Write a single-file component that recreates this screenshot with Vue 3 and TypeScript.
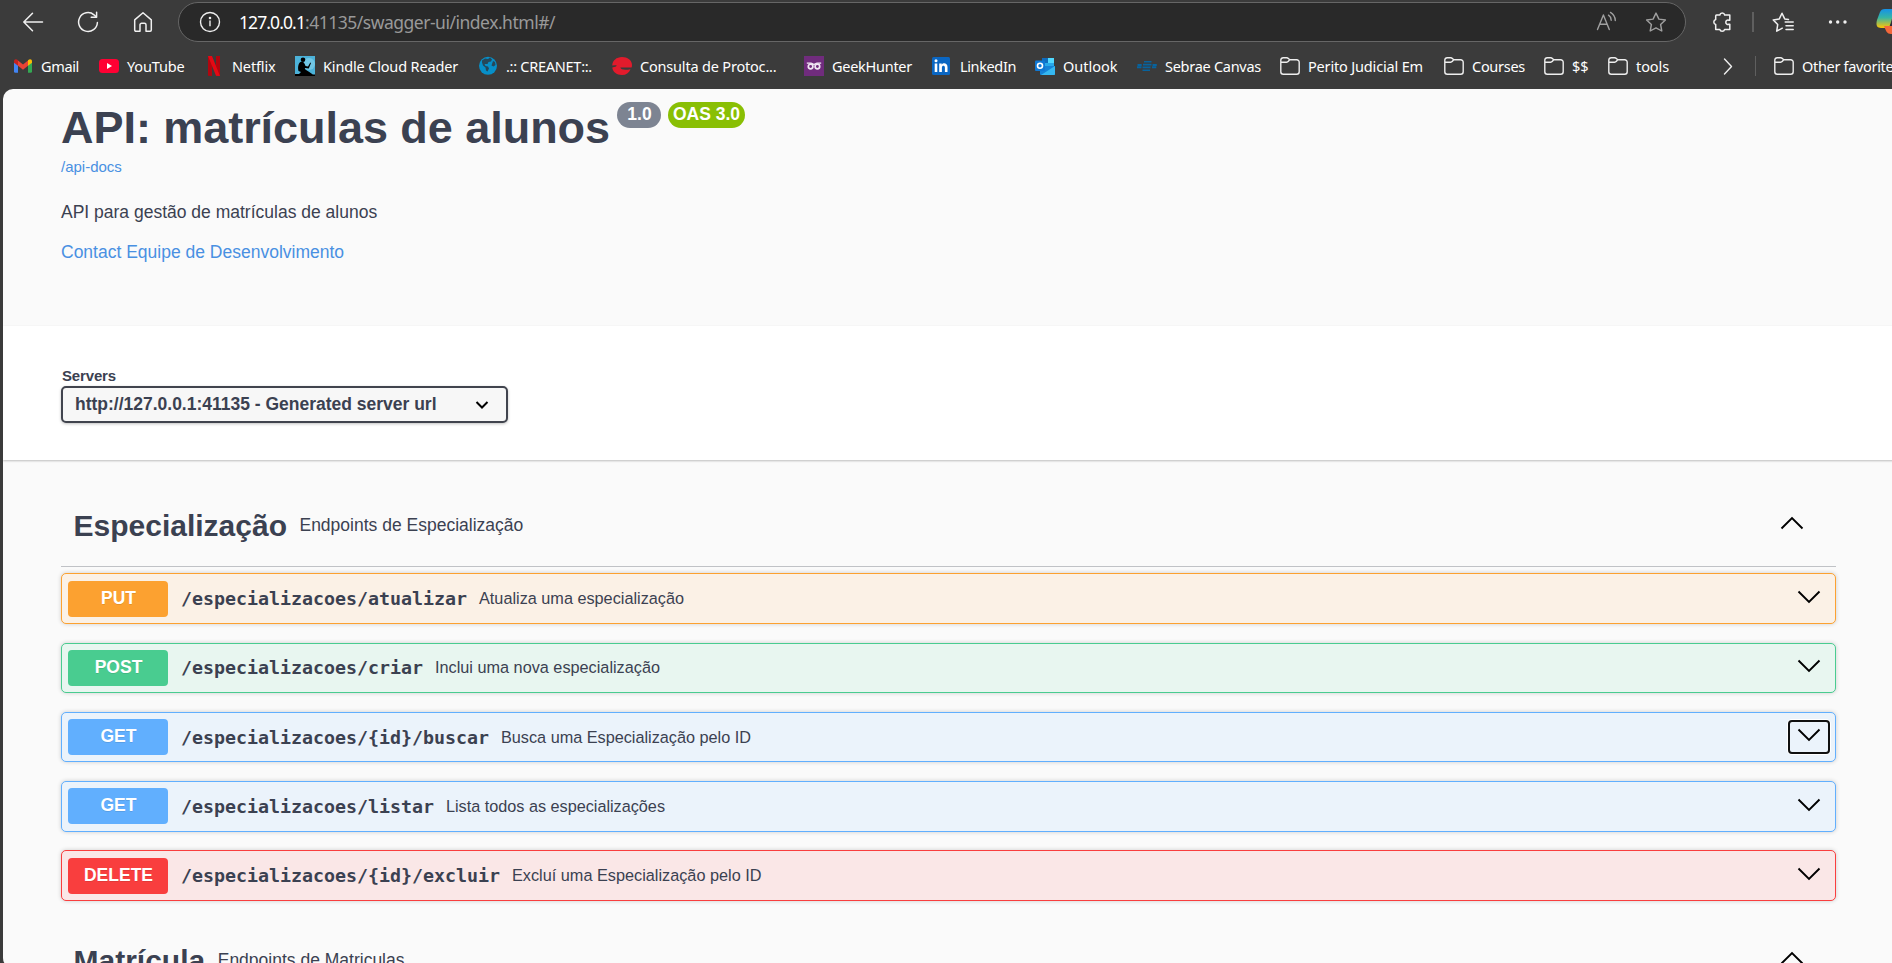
<script setup lang="ts">
import type { ObjectDirective } from 'vue'

interface Bookmark { icon: string; label: string; slot: number; textWidth: number }
interface Operation { method: string; path: string; pathWidth: number; summary: string; summaryWidth: number; focused?: boolean }

// Spreads letters evenly so that a label fills the given width.
const vFit: ObjectDirective<HTMLElement, number> = {
  mounted(el, binding) {
    const count = (el.textContent ?? '').trim().length
    const natural = el.getBoundingClientRect().width
    if (count > 1) el.style.letterSpacing = `${(binding.value - natural) / count}px`
  },
}

const bookmarks: Bookmark[] = [
  { icon: 'gmail', label: 'Gmail', slot: 86, textWidth: 38 },
  { icon: 'youtube', label: 'YouTube', slot: 105, textWidth: 57.5 },
  { icon: 'netflix', label: 'Netflix', slot: 91, textWidth: 43.5 },
  { icon: 'kindle', label: 'Kindle Cloud Reader', slot: 183, textWidth: 135 },
  { icon: 'globe', label: '.:: CREANET::.', slot: 134, textWidth: 86 },
  { icon: 'consulta', label: 'Consulta de Protoc...', slot: 192, textWidth: 136.5 },
  { icon: 'geek', label: 'GeekHunter', slot: 128, textWidth: 80 },
  { icon: 'linkedin', label: 'LinkedIn', slot: 103, textWidth: 56 },
  { icon: 'outlook', label: 'Outlook', slot: 102, textWidth: 54.5 },
  { icon: 'sebrae', label: 'Sebrae Canvas', slot: 143, textWidth: 96 },
  { icon: 'folder', label: 'Perito Judicial Em', slot: 164, textWidth: 115 },
  { icon: 'folder', label: 'Courses', slot: 100, textWidth: 53 },
  { icon: 'folder', label: '$$', slot: 64, textWidth: 16.5 },
  { icon: 'folder', label: 'tools', slot: 115, textWidth: 33 },
  { icon: 'more', label: '', slot: 51, textWidth: 0 },
  { icon: 'folder', label: 'Other favorites', slot: 140, textWidth: 98 },
]

const operations: Operation[] = [
  { method: 'PUT', path: '/especializacoes/atualizar', pathWidth: 286, summary: 'Atualiza uma especialização', summaryWidth: 205 },
  { method: 'POST', path: '/especializacoes/criar', pathWidth: 242, summary: 'Inclui uma nova especialização', summaryWidth: 225 },
  { method: 'GET', path: '/especializacoes/{id}/buscar', pathWidth: 308, summary: 'Busca uma Especialização pelo ID', summaryWidth: 250, focused: true },
  { method: 'GET', path: '/especializacoes/listar', pathWidth: 253, summary: 'Lista todos as especializações', summaryWidth: 219 },
  { method: 'DELETE', path: '/especializacoes/{id}/excluir', pathWidth: 319, summary: 'Excluí uma Especialização pelo ID', summaryWidth: 249.5 },
]
</script>

<template>
  <div class="window">
    <header class="chrome">
      <div class="toolbar">
        <svg class="tool back" viewBox="0 0 22 22"><path d="M20.5 11H2M10.5 2.2 1.8 11l8.7 8.8" /></svg>
        <svg class="tool reload" viewBox="0 0 22 22"><path d="M20.4 11.5A9.4 9.4 0 1 1 17 3.8L19.5 6M19.6 1.2V6.3H14.2" /></svg>
        <svg class="tool home" viewBox="0 0 22 22"><path d="M2.7 8.9 11 1.8l8.3 7.1V19a1.2 1.2 0 0 1-1.2 1.2H14v-6.4a1.6 1.6 0 0 0-1.6-1.6H9.6A1.6 1.6 0 0 0 8 13.8v6.4H3.9A1.2 1.2 0 0 1 2.7 19Z" /></svg>
        <div class="address">
          <svg class="info-icon" viewBox="0 0 22 22"><circle cx="11" cy="11" r="9.5" /><path d="M11 9.6v5.6" /><circle cx="11" cy="7" r=".6" /></svg>
          <span class="url"><b v-fit="66">127.0.0.1</b><span v-fit="250">:41135/swagger-ui/index.html#/</span></span>
          <svg class="address-icon read" viewBox="0 0 22 22"><path d="M1.5 18.5 7.4 4l5.9 14.5M3.700 13.3h7.5M12.5 4.2c1.700 1.100 2.600 2.800 2.700 5M14.500 1.400c3.100 1.900 4.700 4.600 4.800 8.100" /></svg>
          <svg class="address-icon" viewBox="0 0 22 22"><path d="m11 2.1 2.9 6 6.500.9-4.800 4.500 1.200 6.500L11 16.900l-5.800 3.100 1.200-6.500L1.600 9l6.500-.9Z" /></svg>
        </div>
        <svg class="tool puzzle" viewBox="0 0 22 22"><path d="M5.600 4h3.200a2.500 2.500 0 0 1 4.900 0h5.100v5.200h-1a2.200 2.200 0 1 0 0 4.100h1v5.200h-5.200a2.500 2.500 0 0 1-4.800 0H4.700v-5a2.600 2.600 0 0 1 0-5V5a1 1 0 0 1 .9-1Z" /></svg>
        <i class="divider tall"></i>
        <svg class="tool favs" viewBox="0 0 22 22"><path d="M10.300 17.200 4.700 20.200l1-6.600L1.300 8.900l6-1L10 2.200l2.700 5.700 3.800.6M13.200 11h8M14 14.800h7.200M14 18.600h7.200" /></svg>
        <svg class="tool dots" viewBox="0 0 22 22"><circle cx="3.500" cy="11" r="1.700" /><circle cx="10.700" cy="11" r="1.700" /><circle cx="18" cy="11" r="1.700" /></svg>
        <svg class="copilot" viewBox="0 0 30 28">
          <defs>
            <linearGradient id="cool" x1="0" y1="0" x2="0" y2="1"><stop offset="0" stop-color="#1591e8" /><stop offset=".45" stop-color="#35b5a6" /><stop offset=".95" stop-color="#f1c40f" /></linearGradient>
          </defs>
          <path d="M9 1h14l-3 6c-4 0-4 4-6 10-1 3-2 3-5 3H5C0 20 0 16 1 12L4 4c1-2 2-3 5-3Z" fill="url(#cool)" />
          <path d="M8 18h7l5-11 10 3v16H15c-4 0-5-3-7-8Z" fill="#f4673a" />
          <path d="M16 1h8l4 9h-9Z" fill="#154da7" />
          <path d="m14 18 4-10h10v10Z" fill="#292c37" />
        </svg>
      </div>

      <nav class="bookmarks">
        <div v-for="(b, i) in bookmarks" :key="i" class="bookmark" :style="{ width: b.slot + 'px' }">
          <svg v-if="b.icon === 'gmail'" class="fav" viewBox="0 0 20 20"><path d="M1 6v9.500a1.300 1.300 0 0 0 1.300 1.300H5V8Z" fill="#4285f4" /><path d="M15 8v8.800h2.700a1.300 1.300 0 0 0 1.300-1.300V6Z" fill="#34a853" /><path d="M5 4.500 10 8.500l5-4v5.200l-5 4-5-4Z" fill="#ea4335" /><path d="M1 5.200C1 3 3.200 2.400 5 4.200v5.500L1 6.800Z" fill="#c5221f" /><path d="M19 5.200c0-2.200-2.200-2.800-4-1v5.500l4-2.900Z" fill="#fbbc04" /></svg>
          <svg v-else-if="b.icon === 'youtube'" class="fav" viewBox="0 0 20 20"><rect x="0" y="3" width="20" height="14" rx="3.500" fill="#ff0033" /><path d="m8 7 5 3-5 3Z" fill="#fff" /></svg>
          <svg v-else-if="b.icon === 'netflix'" class="fav" viewBox="0 0 20 20"><path d="M4 0h4v20l-4-.3ZM12 0h4v20l-4-.3Z" fill="#b1060f" /><path d="M4 0h4l8 20-4-.3Z" fill="#e50914" /></svg>
          <svg v-else-if="b.icon === 'kindle'" class="fav" viewBox="0 0 20 20"><rect width="20" height="20" fill="#4cb2d9" /><circle cx="14" cy="8" r="6" fill="#8bd5ec" opacity=".6" /><path d="M0 20v-2h4l2-2-2.500-1c-1-4 0-8 2-9 3-1 4 1 5 4l2.500.5 2.300-4 .7.500-2.200 5.500-4-.5.500 1.500 4 2.500 3.500 2.500H20v1.500Z" fill="#000" /><circle cx="8" cy="3.700" r="2.300" fill="#000" /></svg>
          <svg v-else-if="b.icon === 'globe'" class="fav" viewBox="0 0 20 20"><circle cx="10" cy="9.800" r="9" fill="#078fc8" /><path d="m4 4.500 3-2 3 .5 2-1.500 2 2-1 2-2.500.5-1 2-3 0 1 2 2.500.5 1 2-1.500 3-1.500-1-.5-3-2.500-2-1-3ZM15 5l2 1 .5 3-2 1.500-2-1Z" fill="#25485a" /></svg>
          <svg v-else-if="b.icon === 'consulta'" class="fav" viewBox="0 0 20 20"><path d="M10 1c5.500 0 10 3 10 8 0 1-.1 1.800-.4 2.500H8.300c.6 2.300 4.700 2.700 10.200 1.700C17 17 14 19 10 19 4.500 19 .5 15.500.3 11.500L4 10.500C5.500 7 8 5.200 11 5.200c2 0 3 1 3 2.300H9.500c-1.500 0-2.500.5-3.500 1.500L.2 9.500C.5 4.500 4.500 1 10 1Z" fill="#e21b2c" /></svg>
          <svg v-else-if="b.icon === 'geek'" class="fav" viewBox="0 0 20 20"><rect width="20" height="20" fill="#702c7d" /><g fill="none" stroke="#f1e7f4" stroke-width="1.700"><circle cx="6.600" cy="10.500" r="2.300" /><circle cx="13.400" cy="10.500" r="2.300" /><path d="M2.800 7.200H7c1.500 0 1.500 1.300 3 1.300s1.500-1.300 3-1.300h4.200" stroke-width="1.300" /></g></svg>
          <svg v-else-if="b.icon === 'linkedin'" class="fav" viewBox="0 0 20 20"><rect x="0" y="1" width="18" height="18" rx="1.500" fill="#0a66c2" /><path d="M2.700 7.500h2.600V16H2.700ZM7.200 7.500h2.500v1.200c1.500-2.300 5.800-1.700 5.800 2.300v5h-2.600v-4.500c0-2.500-3-2.300-3 0V16H7.200Z" fill="#fff" /><circle cx="4" cy="4.700" r="1.500" fill="#fff" /></svg>
          <svg v-else-if="b.icon === 'outlook'" class="fav" viewBox="0 0 20 20"><path d="M7 2h12v10H7Z" fill="#28a8ea" /><path d="M7 2h6v5H7Z" fill="#0f6cbd" /><path d="M13 2h6v5h-6Z" fill="#50d9ff" /><path d="M5 10h15v8a1 1 0 0 1-1 1H6a1 1 0 0 1-1-1Z" fill="#1583d7" /><path d="m20 10-14 9h13a1 1 0 0 0 1-1Z" fill="#35b8f1" /><rect x="0" y="4.500" width="10" height="10.500" rx="1" fill="#0f78d4" /><circle cx="5" cy="9.700" r="2.500" fill="none" stroke="#fff" stroke-width="1.600" /></svg>
          <svg v-else-if="b.icon === 'sebrae'" class="fav" viewBox="0 0 20 20"><path d="M7 5.700h7.500M5.500 14.300H13" stroke="#07639e" stroke-width="1.600" /><path d="M.5 9h4.200M0 11.200h4.500M6 8.600h8.500M5.500 11.400h8M15.500 9h4.300M15 11.200h4.300" stroke="#07639e" stroke-width="1.900" /></svg>
          <svg v-else-if="b.icon === 'folder'" class="fav line" viewBox="0 0 20 20"><path d="M.8 4A2.500 2.500 0 0 1 3.300 1.700h3.400c.8 0 1.200.3 1.700.8l1.300 1.300h7A2.500 2.500 0 0 1 19.200 6.300v9.500a2.500 2.500 0 0 1-2.500 2.500H3.300A2.500 2.500 0 0 1 .8 15.800ZM.8 6.200h5.800c.9 0 1.200-.2 1.800-.9l1.300-1.500" /></svg>
          <svg v-else class="fav line" viewBox="0 0 20 20"><path d="m1.500 3 7 7.500-7 7.500" /></svg>
          <span v-if="b.label" v-fit="b.textWidth" class="bookmark-label">{{ b.label }}</span>
          <i v-if="b.icon === 'more'" class="divider"></i>
        </div>
      </nav>
    </header>

    <main class="page">
      <section class="info">
        <div class="title-row">
          <h1 v-fit="549">API: matrículas de alunos</h1>
          <span class="badge version">1.0</span>
          <span class="badge oas">OAS 3.0</span>
        </div>
        <a class="docs">/api-docs</a>
        <p class="about">API para gestão de matrículas de alunos</p>
        <a class="contact">Contact Equipe de Desenvolvimento</a>
      </section>

      <section class="servers">
        <label>Servers</label>
        <div class="select">
          <span v-fit="361.5">http://127.0.0.1:41135 - Generated server url</span>
          <svg viewBox="0 0 14 10"><path d="m1.500 2 5.500 5.500L12.500 2" /></svg>
        </div>
      </section>

      <section class="tag">
        <div class="tag-head">
          <h2>Especialização</h2>
          <span>Endpoints de Especialização</span>
          <svg viewBox="0 0 24 14"><path d="M1.500 12.500 12 2l10.500 10.500" /></svg>
        </div>
        <div class="operations">
          <article v-for="op in operations" :key="op.path" class="op" :class="op.method.toLowerCase()">
            <span class="method"><b>{{ op.method }}</b></span>
            <code v-fit="op.pathWidth">{{ op.path }}</code>
            <span v-fit="op.summaryWidth" class="summary">{{ op.summary }}</span>
            <button :class="{ focused: op.focused }">
              <svg viewBox="0 0 24 14"><path d="M1.500 1.500 12 12 22.500 1.500" /></svg>
            </button>
          </article>
        </div>
      </section>

      <section class="tag next">
        <div class="tag-head">
          <h2>Matrícula</h2>
          <span>Endpoints de Matriculas</span>
          <svg viewBox="0 0 24 14"><path d="M1.500 12.500 12 2l10.500 10.500" /></svg>
        </div>
      </section>
    </main>
  </div>
</template>

<style>
html, body { margin: 0; overflow: hidden; background: #3b3b3b; }
</style>

<style scoped>
* { box-sizing: border-box; }
.window { width: 1892px; height: 963px; overflow: hidden; background: #3b3b3b; font-family: "Liberation Sans", Arial, sans-serif; }
.chrome { height: 89px; font-family: "Noto Sans", "Open Sans", sans-serif; color: #fff; }

.toolbar { display: flex; align-items: center; height: 44px; padding-left: 22px; }
.tool { flex: none; width: 22px; height: 22px; fill: none; stroke: #f0f0f0; stroke-width: 1.5; stroke-linecap: round; stroke-linejoin: round; }
.reload { margin-left: 33px; }
.home { margin-left: 33px; }
.address { display: flex; align-items: center; flex: none; width: 1508px; height: 40px; margin-left: 24px; padding: 0 18px 0 20px; border: 1px solid #666; border-radius: 20px; background: #292929; }
.info-icon { width: 22px; height: 22px; fill: none; stroke: #eee; stroke-width: 1.4; }
.url { display: flex; flex: 1; margin-left: 18px; padding-bottom: 1px; font-size: 17.5px; line-height: 24px; color: #999; }
.url > * { display: inline-block; white-space: nowrap; font-weight: 400; }
.url b { color: #fff; }
.address-icon { width: 22px; height: 22px; fill: none; stroke: #a0a0a0; stroke-width: 1.4; stroke-linejoin: round; stroke-linecap: round; }
.read { margin-right: 27px; }
.puzzle { margin-left: 25px; }
.divider { flex: none; width: 1px; height: 20px; background: #5f5f5f; }
.divider.tall { width: 2px; margin-left: 19px; }
.favs { margin-left: 18px; }
.dots { margin-left: 33px; fill: #f0f0f0; stroke: none; }
.copilot { flex: none; width: 30px; height: 28px; margin-left: 27px; }

.bookmarks { display: flex; align-items: center; height: 44px; padding-left: 13px; }
.bookmark { display: flex; align-items: center; flex: none; }
.fav { flex: none; width: 20px; height: 20px; }
.fav.line { fill: none; stroke: #eee; stroke-width: 1.4; stroke-linejoin: round; stroke-linecap: round; }
.bookmark-label { flex: none; margin-left: 8px; font-size: 14.5px; line-height: 20px; white-space: nowrap; }
.bookmark .divider { margin-left: 12px; }

.page { width: 1900px; height: 879px; margin-left: 3px; overflow: hidden; border-radius: 10px; background: #fafafa; color: #3b4151; }
.info { height: 237px; padding: 13px 0 0 58px; }
.title-row { display: flex; align-items: flex-start; }
h1 { margin: 0; padding-top: 1px; font-size: 45px; line-height: 50px; white-space: nowrap; }
.badge { height: 26px; border-radius: 13px; color: #fff; font-size: 17.5px; font-weight: 700; line-height: 24px; text-align: center; white-space: nowrap; }
.version { width: 44px; margin-left: 7px; padding-left: 1px; background: #7d8492; }
.oas { width: 77px; margin-left: 7px; background: #89bf04; }
.docs, .contact { display: block; color: #4990e2; }
.docs { margin-top: 4px; font-size: 15px; line-height: 20px; }
.about { margin: 23px 0 16px; font-size: 17.5px; line-height: 24px; }
.contact { font-size: 17.5px; line-height: 24px; }

.servers { height: 134px; padding: 41px 0 0 58px; background: #fff; box-shadow: 0 1px 2px rgba(0, 0, 0, .25); }
label { display: block; padding-left: 1px; font-size: 15px; font-weight: 700; line-height: 18px; letter-spacing: -.15px; }
.select { display: flex; align-items: center; justify-content: space-between; width: 447px; height: 37px; margin-top: 1px; padding: 0 17px 0 12px; border: 2px solid #41444e; border-radius: 5px; background: #f7f7f7; box-shadow: 0 1px 3px rgba(0, 0, 0, .25); font-size: 17.5px; font-weight: 700; white-space: nowrap; }
.select svg { width: 14px; height: 10px; fill: none; stroke: #000; stroke-width: 2; }

.tag { width: 1775px; margin: 25px 0 0 58px; }
.tag-head { display: flex; align-items: center; height: 82px; padding: 0 32.5px 0 12.5px; border-bottom: 1px solid rgba(59, 65, 81, .3); }
h2 { margin: 0; font-size: 30px; line-height: 34px; }
.tag-head span { flex: 1; margin-left: 12.500px; padding-bottom: 2px; font-size: 17.5px; line-height: 24px; }
.tag-head svg { width: 24px; height: 14px; margin-bottom: 5px; }
.tag-head svg, button svg { fill: none; stroke: #000; stroke-width: 1.9; }

.operations { display: flex; flex-direction: column; gap: 18.8px; padding-top: 6.3px; }
.op { display: flex; align-items: center; height: 50.5px; padding: 0 5px 0 6px; border: 1px solid; border-radius: 5px; box-shadow: 0 0 4px rgba(0, 0, 0, .19); }
.method { display: flex; align-items: center; justify-content: center; width: 100px; height: 36px; padding: 0 0 1px 1px; border-radius: 4px; color: #fff; font-size: 17.5px; text-shadow: 0 1px 0 rgba(0, 0, 0, .1); }
.put .method { margin-top: 1px; }
code { margin-left: 13px; font-family: "DejaVu Sans Mono", monospace; font-size: 18.3px; font-weight: 700; white-space: nowrap; }
.summary { margin-left: 12px; font-size: 16.25px; white-space: nowrap; }
button { display: flex; align-items: center; justify-content: center; width: 42px; height: 34px; margin: 0 0 0 auto; padding: 0 1px 3.5px 0; border: 0; border-radius: 4px; background: transparent; }
button svg { flex: none; width: 24px; height: 14px; }
.focused { border: 2px solid #101010; box-shadow: 0 0 0 1px #fff; }
.put { border-color: #fca130; background: #fbf1e6; }
.put .method { background: #fca130; }
.post { border-color: #49cc90; background: #e8f6f0; }
.post .method { background: #49cc90; }
.get { border-color: #61affe; background: #ebf3fb; }
.get .method { background: #61affe; }
.delete { border-color: #f93e3e; background: #fae7e7; }
.delete .method { background: #f93e3e; }
.next { margin-top: 19.400px; }
</style>
